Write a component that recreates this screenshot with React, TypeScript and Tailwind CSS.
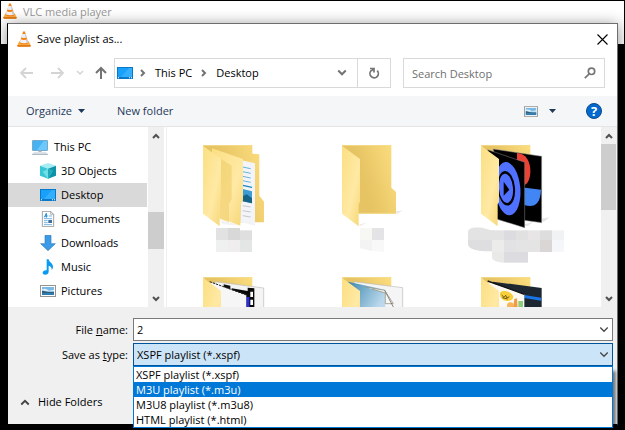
import React, { useState } from "react";

function ConeIcon({ className }: { className?: string }) {
  return (
    <svg viewBox="0 0 42 48" className={className} aria-hidden="true">
      <path d="M7 31h28l6 12c0 3-1 4-3 4H4c-2 0-3-1-3-4z" fill="#fbab45" />
      <path d="M1 42h40v2c0 2-1 3-3 3H4c-2 0-3-1-3-3z" fill="#e07a14" />
      <path d="M18 3c1-3 5-3 6 0l10 33c-6 5-20 5-26 0z" fill="#f4800f" />
      <path d="M15.900 9h10.200l3 10.500c-3 2-13 2-16.200 0z" fill="#ececf0" />
      <path d="M11.300 25c5 3 14 3 19.400 0l2.600 9c-6 4-18 4-24.600 0z" fill="#f2f2f5" />
      <path d="M24 9h2.100l3 10.500-3 1.300zM27 26.600l3.700-1.600 2.600 9-4 2z" fill="#c4c5cc" />
    </svg>
  );
}

function DesktopIcon() {
  return (
    <svg viewBox="0 0 48 36" className="h-3 w-4 shrink-0" aria-hidden="true">
      <rect width="48" height="36" fill="#0a78c8" />
      <rect x="3" y="3" width="42" height="27" fill="#18a0fb" />
      <path d="M36 3h9v27H12z" fill="#35aefc" />
      <path d="M3 31h3v3H3zM36 31h3v3h-3zM42 31h3v3h-3z" fill="#fff" />
    </svg>
  );
}

function PcIcon() {
  return (
    <svg viewBox="0 0 48 45" className="h-[15px] w-4 shrink-0" aria-hidden="true">
      <rect x="1" y="1" width="46" height="31" fill="#2f7fb5" />
      <rect x="3" y="3" width="42" height="27" fill="#45b2f2" />
      <path d="M35 3h10v27H15z" fill="#6cc8fa" />
      <path d="M19 32h10v4H19z" fill="#a9b8c4" />
      <path d="M6 37h36l6 6H0z" fill="#d3dbe2" />
      <path d="M0 42h48v2H0z" fill="#8fa0ae" />
    </svg>
  );
}

function CubeIcon() {
  return (
    <svg viewBox="0 0 48 48" className="size-4 shrink-0" aria-hidden="true">
      <path d="M0 8L24 0l24 8-24 9z" fill="#a4edf2" />
      <path d="M0 8l24 9v30L0 38z" fill="#37c6d6" />
      <path d="M48 8l-24 9v30l24-9z" fill="#0d93a8" />
      <path d="M24 17l14 6-14 24L8 26z" fill="#6fdfe6" />
      <path d="M24 17l14 6-14 24z" fill="#22aabb" />
    </svg>
  );
}

function DocumentIcon() {
  return (
    <svg viewBox="0 0 48 48" className="size-4 shrink-0" aria-hidden="true">
      <path d="M7 1h25l9 9v37H7z" fill="#fff" stroke="#8a8f94" strokeWidth="2.5" />
      <path d="M32 1v9h9" fill="none" stroke="#8a8f94" strokeWidth="2" />
      <path d="M19 7l-6 12M19 7v13M15 15h8" stroke="#1e88d2" strokeWidth="3" fill="none" />
      <path d="M26 15h10M12 23h24M12 29h11M12 35h11M12 41h24" stroke="#5aa6dc" strokeWidth="2.5" />
      <rect x="25" y="27" width="11" height="9" fill="#3d6f9a" />
    </svg>
  );
}

function DownloadIcon() {
  return (
    <svg viewBox="0 0 48 48" className="size-4 shrink-0" aria-hidden="true">
      <path d="M15 1h18v25h13L24 47 2 26h13z" fill="#3c9be6" stroke="#2f7fc4" strokeWidth="2" />
    </svg>
  );
}

function MusicIcon() {
  return (
    <svg viewBox="0 0 48 48" className="size-4 shrink-0" aria-hidden="true">
      <path d="M20 1h6c1 9 13 12 13 22 0 4-1 7-4 10 1-9-4-12-9-13v18c0 6-5 9-10 9-5 0-8-3-8-6 0-5 6-8 12-7z" fill="#0a9bf0" />
    </svg>
  );
}

function PictureIcon({ className = "h-3 w-4 shrink-0" }: { className?: string }) {
  return (
    <svg viewBox="0 0 48 36" className={className} aria-hidden="true">
      <rect x="1.5" y="1.5" width="45" height="33" fill="#fff" stroke="#949494" strokeWidth="3" />
      <rect x="6" y="6" width="36" height="24" fill="#79b9e6" />
      <path d="M6 13c8-4 16 0 20 4l16-3v5H6z" fill="#d9eefa" />
      <path d="M6 17c9-1 14 6 36 4v4H6z" fill="#34607a" />
      <path d="M6 24h36v6H6z" fill="#2f7db0" />
    </svg>
  );
}

function Chevron({ className, points, width = 2 }: { className: string; points: string; width?: number }) {
  return (
    <svg viewBox="0 0 8 8" className={className} fill="none" stroke="currentColor" strokeWidth={width} aria-hidden="true">
      <polyline points={points} />
    </svg>
  );
}

const UP = "1,6 4,3 7,6";
const DOWN = "1,2 4,5 7,2";
const RIGHT = "2,1 5,4 2,7";

function Caret() {
  return (
    <svg viewBox="0 0 14 8" className="h-1 w-[7px]" fill="currentColor" aria-hidden="true">
      <path d="M0 0h14L7 8z" />
    </svg>
  );
}

function Arrow({ up, flip }: { up?: boolean; flip?: boolean }) {
  return (
    <svg viewBox="0 0 14 14" className="size-3.5" fill="none" stroke="currentColor" strokeWidth={up ? 2 : 1.8} aria-hidden="true">
      {up ? <path d="M7 13V2M2 7l5-5 5 5" /> : flip ? <path d="M1 7h11M8 2l5 5-5 5" /> : <path d="M13 7H2M6 2L1 7l5 5" />}
    </svg>
  );
}

function Gradients() {
  return (
    <svg className="absolute size-0" aria-hidden="true">
      <defs>
        <linearGradient id="back" x1="0" y1="0.4" x2="1" y2="0">
          <stop offset="0.3" stopColor="#e6c363" />
          <stop offset="1" stopColor="#fddf80" />
        </linearGradient>
        <linearGradient id="flap" x1="0" y1="0" x2="1" y2="1">
          <stop offset="0" stopColor="#fbdf82" />
          <stop offset="0.6" stopColor="#ffe9a4" />
          <stop offset="1" stopColor="#f6d777" />
        </linearGradient>
        <linearGradient id="sky" x1="0" y1="0" x2="1" y2="1">
          <stop offset="0" stopColor="#3c87ad" />
          <stop offset="0.6" stopColor="#b9d7ec" />
          <stop offset="1" stopColor="#dcdff0" />
        </linearGradient>
      </defs>
    </svg>
  );
}

const FLAP = "M0 2L54 42V170L50 178V244L0 206z";

function Thumb({ children }: { children: React.ReactNode }) {
  return (
    <svg viewBox="-45 0 297 396" className="h-[132px] w-[99px]" aria-hidden="true">
      {children}
    </svg>
  );
}

function PapersFolder() {
  return (
    <Thumb>
      <path d="M0 0H148V26L169 28V152L183 170V232H110L0 100z" fill="url(#back)" />
      <path d="M50 226L60 238 90 241 112 240z" fill="#f2f2f4" />
      <path d="M116 46L156 55V242L112 230z" fill="#f3f4f8" />
      <path d="M119 66l24 5M119 80l24 5M119 94l24 5M119 107l24 5" stroke="#67b3dc" strokeWidth="3" />
      <path d="M119 121l28 6" stroke="#1787c4" strokeWidth="4" />
      <path d="M119 132l28 7v36l-28-6z" fill="#3d9cd2" />
      <path d="M119 154l12-6 16 12v15l-28-6z" fill="#176388" />
      <path d="M119 182l24 4M119 197l24 4M119 212l24 4" stroke="#c4c7cc" strokeWidth="3" />
      <path d="M27 10L120 42V165L112 180V242L27 210z" fill="url(#flap)" />
      <path d="M54 42L86 62V162L78 178V232L50 222z" fill="#efd06f" opacity="0.65" />
      <path d={FLAP} fill="url(#flap)" />
      <path d="M0 1H147" stroke="#f4dc8c" strokeWidth="3" />
      <path d="M39 249h36v36H39z" fill="#e2e2e2" />
      <path d="M75 249h36v36H75z" fill="#d8d8d8" />
      <path d="M111 256h36v29h-36z" fill="#dfdfdf" />
      <path d="M39 285h36v36H39z" fill="#eff1f1" />
      <path d="M75 285h36v36H75z" fill="#f0edef" />
      <path d="M111 285h36v36h-36z" fill="#e4e6e6" />
    </Thumb>
  );
}

function EmptyFolder() {
  return (
    <Thumb>
      <path d="M160 200L182 196 166 206zM50 240L76 232 56 242z" fill="#e6e6e6" />
      <path d="M0 0H148V128L162 141V206H51L0 170z" fill="url(#back)" />
      <path d={FLAP} fill="url(#flap)" />
      <path d="M0 1H147M52 205H162" stroke="#f4dc8c" strokeWidth="3" fill="none" />
      <path d="M54 249h36v36H54z" fill="#f7f7f4" />
      <path d="M90 249h36v36H90z" fill="#e4e4e7" />
      <path d="M54 285h36v33l-36-8z" fill="#f3f3f3" />
      <path d="M90 285h36v36l-36-3z" fill="#f8f8f8" />
    </Thumb>
  );
}

function VideoFolder() {
  return (
    <Thumb>
      <path d="M180 222l26-5-18 14zM130 238l26-6-18 12z" fill="#e4e4e4" />
      <path d="M0 0H148V60L60 80z" fill="url(#back)" />
      <path d="M36 12L182 34V233L100 222z" fill="#000" stroke="#999" strokeWidth="1.5" />
      <path d="M108 24C136 26 149 50 148 82 147 106 138 120 126 122L108 60z" fill="#ea4335" />
      <path d="M120 127L180 134C178 180 158 188 130 180z" fill="#4285f4" />
      <path d="M20 14L131 52V248L46 222z" fill="#000" stroke="#888" strokeWidth="1.5" />
      <ellipse cx="80" cy="131" rx="38" ry="80" transform="rotate(-5 80 131)" fill="#5070ff" />
      <ellipse cx="76" cy="130" rx="26" ry="52" transform="rotate(-5 76 130)" fill="#000" />
      <ellipse cx="75" cy="130" rx="21" ry="44" transform="rotate(-5 75 130)" fill="#5070ff" />
      <path d="M68 110L85 134 68 152z" fill="#000" />
      <path d={FLAP} fill="url(#flap)" />
      <path d="M0 1H147" stroke="#f4dc8c" strokeWidth="3" />
      <path d="M-39 262c0-14 20-16 45-13 15 4 22 7 34 7v31h-79z" fill="#e4e3e4" />
      <path d="M-39 285h72v34c-35 1-72-4-72-22z" fill="#dedddf" />
      <path d="M33 256h36v29H33z" fill="#e3e3e3" />
      <path d="M69 256h36v29H69z" fill="#dcdce0" />
      <path d="M105 256h36v29h-36z" fill="#e1e1e1" />
      <path d="M141 256h36v29h-36z" fill="#e7e5e5" />
      <path d="M177 256h36v29h-36z" fill="#dedddd" />
      <path d="M213 256h36v29h-36z" fill="#f1f2f4" />
      <path d="M33 285h36v36H33z" fill="#ececea" />
      <path d="M69 285h36v36H69z" fill="#e2e2e5" />
      <path d="M105 285h72v36h-72z" fill="#e4e4e5" />
      <path d="M177 285h36v36h-36z" fill="#d9d6d5" />
      <path d="M213 285h36v36h-36z" fill="#f5f6f9" />
      <path d="M33 321h36v32c-18 0-36-6-36-16z" fill="#e9e9e8" />
      <path d="M69 321h72v32H69z" fill="#dcdbe0" />
    </Thumb>
  );
}

function FilmFolder() {
  return (
    <Thumb>
      <path d="M0 0H148V60L60 80z" fill="url(#back)" />
      <path d="M36 14L182 33V200H60z" fill="#f4f4f5" stroke="#bbb" strokeWidth="2" />
      <path d="M62 22l20 4v12l-20-6z" fill="#111" />
      <path d="M86 34l48 8v-10l20 2v166h-28V60L86 42z" fill="#0a0a0a" />
      <path d="M142 44h8v16h-8zM142 68h8v16h-8z" fill="#fff" />
      <path d="M131 60h8v120h-8z" fill="#2a2af0" />
      <path d="M22 16L130 54V200H40z" fill="#f6f6f7" />
      <path d="M20 14L130 54" stroke="#222" strokeWidth="3" strokeDasharray="7 3" />
      <path d="M0 2L54 42V200H0z" fill="url(#flap)" />
      <path d="M0 1H147" stroke="#f4dc8c" strokeWidth="3" />
    </Thumb>
  );
}

function PhotoFolder() {
  return (
    <Thumb>
      <path d="M0 0H148V60L60 80z" fill="url(#back)" />
      <path d="M36 14L182 32V200H60z" fill="#f5f5f6" stroke="#bbb" strokeWidth="2" />
      <path d="M18 14L130 38V200H54z" fill="url(#sky)" />
      <path d="M70 30L128 40 154 80H130V48L90 36" fill="#f7f7f7" stroke="#8b8468" strokeWidth="2" />
      <path d="M128 40L154 90V120" fill="none" stroke="#555" strokeWidth="2" />
      <path d="M0 2L54 42V200H0z" fill="url(#flap)" />
      <path d="M0 1H147" stroke="#f4dc8c" strokeWidth="3" />
    </Thumb>
  );
}

function ArtFolder() {
  return (
    <Thumb>
      <path d="M0 0H148V60L60 80z" fill="url(#back)" />
      <path d="M36 14L182 33V200H60z" fill="#1d2732" />
      <path d="M130 54l50 8v9l-50-8z" fill="#1876e8" />
      <path d="M22 14L130 52V200H40z" fill="#fbf9f2" />
      <path d="M20 12L130 52" stroke="#111" strokeWidth="4" />
      <path d="M58 46c10-8 30-2 38 10 4 12-10 18-22 15-12-2-20-13-16-25z" fill="#f7cf3a" />
      <path d="M62 54l7 7 5-6 4 8 7-4M64 62l16 4" stroke="#553f10" strokeWidth="2.5" fill="none" />
      <circle cx="88" cy="86" r="10" fill="#f7b45a" />
      <path d="M100 66l8-2 2 30h-14z" fill="#ef9c42" />
      <path d="M112 72h14v22h-14z" fill="#8fcd7c" />
      <path d="M0 2L54 42V200H0z" fill="url(#flap)" />
      <path d="M0 1H147" stroke="#f4dc8c" strokeWidth="3" />
    </Thumb>
  );
}

const places = [
  { name: "3D Objects", icon: <CubeIcon /> },
  { name: "Desktop", icon: <DesktopIcon /> },
  { name: "Documents", icon: <DocumentIcon /> },
  { name: "Downloads", icon: <DownloadIcon /> },
  { name: "Music", icon: <MusicIcon /> },
  { name: "Pictures", icon: <PictureIcon /> },
];

const folders = [
  { name: "Papers", art: <PapersFolder /> },
  { name: "Empty", art: <EmptyFolder /> },
  { name: "Videos", art: <VideoFolder /> },
  { name: "Film", art: <FilmFolder /> },
  { name: "Photos", art: <PhotoFolder /> },
  { name: "Art", art: <ArtFolder /> },
];

const types = [
  "XSPF playlist (*.xspf)",
  "M3U playlist (*.m3u)",
  "M3U8 playlist (*.m3u8)",
  "HTML playlist (*.html)",
];

function ScrollBar({ thumb }: { thumb: string }) {
  return (
    <div className="flex w-4 shrink-0 flex-col items-center bg-[#f0f0f0] text-[#505050]">
      <button type="button" aria-label="Scroll up" className="flex h-[17px] items-center">
        <Chevron className="size-2" points={UP} />
      </button>
      <div className="flex w-full flex-1 flex-col">
        <div className={thumb} />
      </div>
      <button type="button" aria-label="Scroll down" className="flex h-[17px] items-center">
        <Chevron className="size-2" points={DOWN} />
      </button>
    </div>
  );
}

export default function App() {
  const [name, setName] = useState("2");
  const [type, setType] = useState(types[0]);

  return (
    <div className="relative min-h-screen bg-black px-[7px] pt-[23px] font-['Open_Sans','Noto_Sans',sans-serif] text-[11px] leading-4 text-black">
      <Gradients />
      <div className="absolute inset-x-px top-px flex h-[43px] items-start gap-1.5 bg-white px-0.5 text-[#999]">
        <ConeIcon className="mt-0.5 h-4 w-3.5" />
        <span className="mt-[3px]">VLC media player</span>
      </div>

      <div role="dialog" aria-label="Save playlist as..." className="relative border border-[#6e6e6e] border-b-black border-l-black bg-white shadow-[0_2px_14px_rgba(0,0,0,0.45)]">
        <header className="flex h-[30px] items-center gap-1.5 px-[9px]">
          <ConeIcon className="h-4 w-3.5" />
          <h1 className="flex-1">Save playlist as...</h1>
          <button type="button" aria-label="Close" className="flex size-3 items-center justify-center">
            <svg viewBox="0 0 11 11" className="size-[11px]" stroke="#000" strokeWidth="1.1" aria-hidden="true">
              <path d="M0.5 0.5l10 10M10.5 0.5l-10 10" />
            </svg>
          </button>
        </header>

        <nav className="flex h-[42px] items-center px-3 pb-1">
          <div className="flex w-[94px] shrink-0 items-center text-[#d4d4d4]">
            <button type="button" aria-label="Back" className="mr-4"><Arrow /></button>
            <button type="button" aria-label="Forward" className="mr-3"><Arrow flip /></button>
            <button type="button" aria-label="Recent locations" className="mr-2.5"><Chevron className="size-2" points={DOWN} width={1.5} /></button>
            <button type="button" aria-label="Up" className="text-[#737373]"><Arrow up /></button>
          </div>
          <div className="flex h-[30px] flex-1 border border-[#d9d9d9]">
            <div className="flex flex-1 items-center pr-2.5 pl-0.5">
              <DesktopIcon />
              <Chevron className="mx-1.5 size-2 text-[#737373]" points={RIGHT} />
              <button type="button" className="ml-0.5">This PC</button>
              <Chevron className="mx-2 size-2 text-[#737373]" points={RIGHT} />
              <button type="button">Desktop</button>
              <button type="button" aria-label="Previous locations" className="ml-auto text-[#737373]">
                <Chevron className="size-2.5" points={DOWN} width={1.6} />
              </button>
            </div>
            <button type="button" aria-label="Refresh" className="flex w-[33px] items-center justify-center border-l border-[#d9d9d9] text-[#737373]">
              <svg viewBox="0 0 12 12" className="size-3" fill="none" stroke="currentColor" strokeWidth="1.7" aria-hidden="true">
                <path d="M9.200 3.700A4.200 4.200 0 1 1 3 3.800L5.500 2.500" />
                <path d="M2 1.500H6V5.500" />
              </svg>
            </button>
          </div>
          <div className="ml-3 flex h-[30px] w-[202px] items-center border border-[#d9d9d9] px-2">
            <input type="text" aria-label="Search Desktop" placeholder="Search Desktop" className="h-6 min-w-0 flex-1 bg-transparent outline-none placeholder:text-[#6f6f6f]" />
            <svg viewBox="0 0 12 12" className="size-3" fill="none" stroke="#777" strokeWidth="1.7" aria-hidden="true">
              <circle cx="7.5" cy="4.3" r="3.2" />
              <path d="M5.2 6.8L0.8 11.2" />
            </svg>
          </div>
        </nav>

        <div className="flex h-[31px] items-center border-b border-[#e5e5e5] bg-[#f5f6f7] pr-[15px] pl-[18px] text-[#1e395b]">
          <button type="button" className="flex w-[91px] items-center gap-1.5">
            Organize
            <Caret />
          </button>
          <button type="button">New folder</button>
          <button type="button" aria-label="Change view" className="ml-auto"><PictureIcon className="h-[11px] w-3.5" /></button>
          <button type="button" aria-label="More views" className="ml-[11px]"><Caret /></button>
          <button type="button" aria-label="Help" className="ml-[30px] flex size-4 items-center justify-center rounded-full border border-[#0a4a8c] bg-[#0469cf] text-[13px] font-bold text-white">?</button>
        </div>

        <div className="flex h-[180px]">
          <div className="w-[139px] shrink-0 overflow-hidden pt-2">
            <button type="button" className="flex h-6 w-full items-center gap-1.5 pl-6 text-left"><PcIcon />This PC</button>
            <ul>
              {places.map((place) => (
                <li key={place.name}>
                  <button
                    type="button"
                    className={`flex h-6 w-full items-center gap-[5px] pl-8 text-left ${place.name === "Desktop" ? "bg-[#d9d9d9]" : ""}`}
                  >
                    {place.icon}
                    {place.name}
                  </button>
                </li>
              ))}
            </ul>
          </div>
          <div className="ml-px flex">
            <ScrollBar thumb="mt-[68px] h-[37px] bg-[#cdcdcd]" />
          </div>
          <div className="ml-0.5 min-w-0 flex-1 overflow-hidden border-l border-[#f0f0f0] pt-[18px] pl-[21px]">
            <ul className="grid grid-cols-[repeat(3,139px)]">
              {folders.map((folder) => (
                <li key={folder.name} className="h-[132px]">
                  <button type="button" aria-label={folder.name}>{folder.art}</button>
                </li>
              ))}
            </ul>
          </div>
          <ScrollBar thumb="h-[66px] w-[15px] bg-[#cdcdcd]" />
        </div>

        <footer className="bg-[#f0f0f0] pt-[11px] pr-1">
          <div className="grid grid-cols-[120px_1fr] items-center gap-x-[5px] gap-y-0.5">
            <label htmlFor="file-name" className="text-right">File <u>n</u>ame:</label>
            <div className="relative">
              <input id="file-name" value={name} onChange={(e) => setName(e.target.value)} className="block h-[23px] w-full border border-[#7a7a7a] bg-white px-[3px] outline-none" />
              <Chevron className="pointer-events-none absolute top-[7px] right-1 size-2.5 text-[#444]" points={DOWN} width={1} />
            </div>
            <label htmlFor="file-type" className="text-right">Save as <u>t</u>ype:</label>
            <div className="relative">
              <select id="file-type" value={type} onChange={(e) => setType(e.target.value)} className="block h-[23px] w-full appearance-none border border-[#00549b] bg-[#cce4f7] px-[3px] outline-none">
                {types.map((t) => <option key={t}>{t}</option>)}
              </select>
              <Chevron className="pointer-events-none absolute top-[7px] right-1 size-2.5 text-[#444]" points={DOWN} width={1} />
              <ul role="listbox" aria-label="Save as type" className="absolute inset-x-0 top-full border border-[#0078d7] bg-white shadow-[3px_5px_3px_rgba(0,0,0,0.5)]">
                {types.map((t, i) => (
                  <li
                    key={t}
                    role="option"
                    aria-selected={i === 1}
                    onClick={() => setType(t)}
                    className={`h-[15px] px-0.5 leading-[15px] ${i === 1 ? "bg-[#0078d7] text-white" : ""}`}
                  >
                    {t}
                  </li>
                ))}
              </ul>
            </div>
          </div>
          <div className="pt-7 pb-3.5 pl-3">
            <button type="button" className="flex items-center gap-2 leading-4">
              <Chevron className="size-2.5 text-[#444]" points={UP} width={1.5} />
              Hide Folders
            </button>
          </div>
        </footer>
      </div>
    </div>
  );
}
